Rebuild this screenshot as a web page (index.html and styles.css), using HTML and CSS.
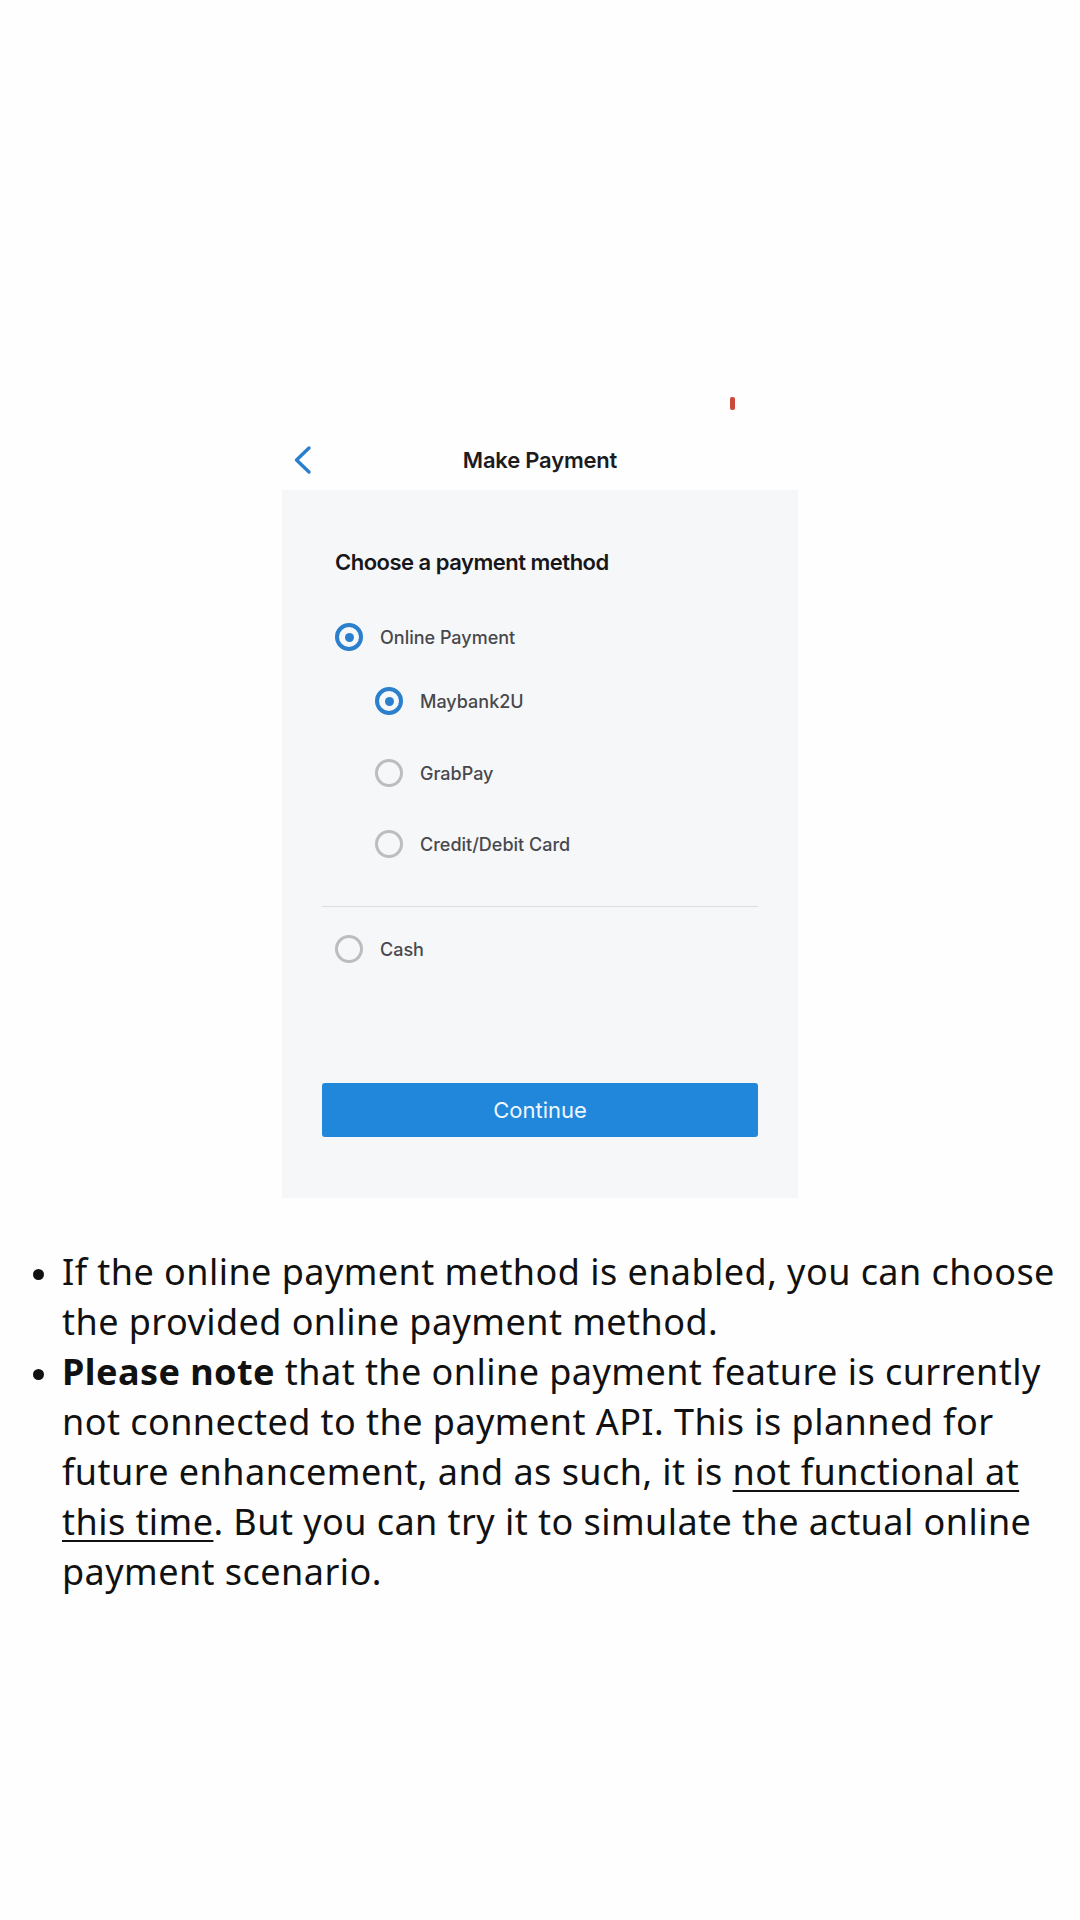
FILE: index.html
```html
<!DOCTYPE html>
<html lang="en">
<head>
<meta charset="utf-8">
<title>Make Payment</title>
<link rel="stylesheet" href="styles.css">
</head>
<body>
<main class="page">
  <section class="phone">
    <div class="status"><span class="rec"></span></div>
    <header class="nav">
      <span class="back">
        <svg width="24" height="30" viewBox="0 0 24 30" aria-hidden="true"><path d="M17 3 L4.5 15 L17 27" fill="none" stroke="#2a80cc" stroke-width="3.4" stroke-linecap="round" stroke-linejoin="round"/></svg>
      </span>
      <h1 class="title">Make Payment</h1>
      <span></span>
    </header>
    <div class="card">
      <h2 class="heading">Choose a payment method</h2>
      <div class="options">
        <div class="opt opt-online"><span class="radio on"></span><span class="label">Online Payment</span></div>
        <div class="opt sub opt-mb"><span class="radio on"></span><span class="label">Maybank2U</span></div>
        <div class="opt sub opt-gp"><span class="radio"></span><span class="label">GrabPay</span></div>
        <div class="opt sub opt-cc"><span class="radio"></span><span class="label">Credit/Debit Card</span></div>
      </div>
      <hr class="divider">
      <div class="options">
        <div class="opt opt-cash"><span class="radio"></span><span class="label">Cash</span></div>
      </div>
      <button class="continue" type="button">Continue</button>
    </div>
  </section>
  <ul class="notes">
    <li>If the online payment method is enabled, you can choose the provided online payment method.</li>
    <li><strong>Please note</strong> that the online payment feature is currently not connected to the payment API. This is planned for future enhancement, and as such, it is <u>not functional at this time</u>. But you can try it to simulate the actual online payment scenario.</li>
  </ul>
</main>
</body>
</html>
```
FILE: styles.css
```css
* { box-sizing: border-box; }
html, body { margin: 0; padding: 0; background: #fefefe; }
body { width: 1080px; height: 1920px; overflow: hidden; font-family: Inter, "Noto Sans", sans-serif; }

.page { padding-top: 397px; }

.phone { width: 516px; margin: 0 auto; }

.status { height: 13px; display: flex; padding-left: 448px; }
.rec { width: 5px; height: 13px; background: #cc4a3c; border-radius: 2px; }

.nav {
  margin-top: 19px;
  height: 61px;
  display: grid;
  grid-template-columns: 1fr auto 1fr;
  align-items: center;
}
.back { padding-left: 10px; display: flex; align-items: center; }
.title {
  margin: 0;
  font-family: Inter, sans-serif;
  font-size: 22px;
  font-weight: 600;
  letter-spacing: -0.2px;
  color: #1c1c1e;
}

.card {
  background: #f6f7f9;
  padding: 60px 40px 61px;
}
.heading {
  margin: 0 0 0 13px;
  height: 24px;
  line-height: 24px;
  font-size: 22px;
  font-weight: 600;
  letter-spacing: -0.5px;
  color: #17171a;
}
.options { padding-left: 13px; }
.opt {
  height: 40px;
  display: flex;
  align-items: center;
  gap: 17px;
}
.opt-online { margin-top: 43px; }
.opt-mb { margin-top: 24px; }
.opt-gp { margin-top: 32px; }
.opt-cc { margin-top: 31px; }
.sub { padding-left: 40px; }
.opt-cash { margin-top: 22px; }

.radio {
  width: 28px;
  height: 28px;
  border-radius: 50%;
  border: 3.5px solid #bdbdbd;
  flex: none;
  display: flex;
  align-items: center;
  justify-content: center;
}
.radio.on { border: 4px solid #2a80cc; }
.radio.on::after {
  content: "";
  width: 9px;
  height: 9px;
  border-radius: 50%;
  background: #2a80cc;
}
.label {
  font-size: 18px;
  font-weight: 500;
  color: #48484d;
}

.divider {
  margin: 42px 0 0;
  border: 0;
  height: 1px;
  background: #dcdde0;
}

.continue {
  margin-top: 114px;
  width: 100%;
  height: 54px;
  border: 0;
  border-radius: 3px;
  background: #2187db;
  color: #eef7ff;
  font-family: Inter, sans-serif;
  font-size: 22px;
  font-weight: 400;
  display: block;
}

.notes {
  margin: 49px 0 0;
  padding: 0 10px 0 62px;
  font-family: "Noto Sans", sans-serif;
  font-size: 36px;
  letter-spacing: 0.45px;
  line-height: 50px;
  color: #111;
}
.notes li::marker { font-size: 32px; }
.notes strong { font-weight: 700; }
.notes u { text-decoration-thickness: 2px; text-underline-offset: 5px; }
```
